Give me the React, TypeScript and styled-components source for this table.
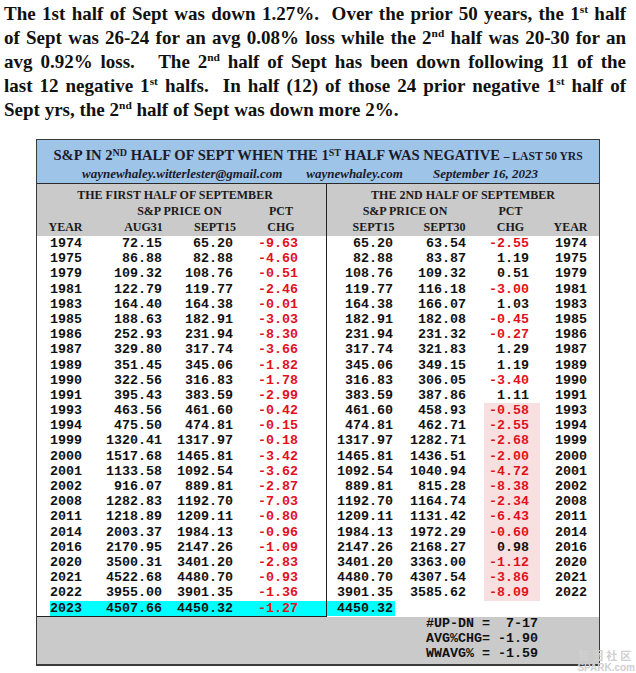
import React from 'react';
import styled, { createGlobalStyle } from 'styled-components';

const Global = createGlobalStyle`
  html, body { margin: 0; padding: 0; background: #fff; }
  body { width: 636px; height: 673px; overflow: hidden; }
`;

const Page = styled.div`
  position: relative;
  width: 636px;
  height: 673px;
  background: #fff;
  overflow: hidden;
`;

const Intro = styled.div`
  padding: 2px 10px 0 4px;
  font-family: "Liberation Serif", "Times New Roman", serif;
  font-weight: bold;
  font-size: 19px;
  line-height: 24px;
  color: #111;
`;

const IntroLine = styled.div<{ $last?: boolean }>`
  text-align: justify;
  text-align-last: ${(p) => (p.$last ? 'left' : 'justify')};
`;

const Sup = styled.sup`
  font-size: 0.6em;
  vertical-align: 0.6em;
  line-height: 0;
`;

const Box = styled.div`
  margin: 17px 0 0 36px;
  width: 564px;
  box-sizing: border-box;
  border: 1px solid #3a3a3a;
  border-bottom-width: 2px;
  background: #fff;
`;

const TitleBand = styled.div`
  height: 44px;
  box-sizing: border-box;
  background: #9ec4e8;
  border-bottom: 1px solid #2a2a2a;
  display: flex;
  flex-direction: column;
  align-items: center;
  font-family: "Liberation Serif", "Times New Roman", serif;
  font-weight: bold;
  color: #1b1b2b;
`;

const Title = styled.div`
  margin-top: 6px;
  font-size: 14.6px;
  line-height: 18px;
  white-space: nowrap;
`;

const TitleSmall = styled.span`
  font-size: 11.6px;
`;

const TitleSup = styled.span`
  font-size: 10px;
  position: relative;
  top: -4px;
`;

const Subtitle = styled.div`
  align-self: flex-start;
  padding-left: 45px;
  font-size: 13px;
  line-height: 15px;
  font-style: italic;
  white-space: nowrap;
  display: flex;
`;

const SubItem = styled.span<{ $gap: number }>`
  margin-left: ${(p) => p.$gap}px;
`;

const Body = styled.div`
  display: grid;
  grid-template-columns: 290px 1fr;
`;

const LeftPanel = styled.div`
  border-right: 1px solid #222;
  border-bottom: 1px solid #222;
`;

const RightPanel = styled.div``;

const Header = styled.div`
  height: 52px;
  box-sizing: border-box;
  padding-top: 3px;
  background: #cacaca;
  font-family: "Liberation Serif", "Times New Roman", serif;
  font-weight: bold;
  font-size: 12px;
  line-height: 16px;
  color: #1a1a1a;
`;

const HeadGrid = styled.div<{ $cols: string }>`
  display: grid;
  grid-template-columns: ${(p) => p.$cols};
  white-space: nowrap;
`;

const HeadCell = styled.div<{ $col: string; $row: number; $shift?: number }>`
  grid-column: ${(p) => p.$col};
  grid-row: ${(p) => p.$row};
  text-align: center;
  position: relative;
  left: ${(p) => p.$shift || 0}px;
`;

const Rows = styled.div`
  font-family: "Liberation Mono", "Courier New", monospace;
  font-weight: bold;
  font-size: 13.33px;
  color: #111;
`;

const LeftRow = styled.div<{ $hl?: boolean }>`
  display: grid;
  grid-template-columns: 32px 80px 71px 65px 1fr;
  margin-left: 13px;
  height: 15.2px;
  line-height: 15.2px;
  background: ${(p) => (p.$hl ? '#00ffff' : 'transparent')};
`;

const RightRow = styled.div`
  display: grid;
  grid-template-columns: 68px 71px 18px 56px 1fr;
  height: 15.2px;
  line-height: 15.2px;
`;

const Num = styled.div<{ $red?: boolean; $pad?: number; $bg?: string; $left?: boolean }>`
  text-align: ${(p) => (p.$left ? 'left' : 'right')};
  white-space: pre;
  color: ${(p) => (p.$red ? '#e3101c' : '#111')};
  padding-right: ${(p) => (p.$left ? 0 : p.$pad || 0)}px;
  padding-left: ${(p) => (p.$left ? p.$pad || 0 : 0)}px;
  background: ${(p) => p.$bg || 'transparent'};
`;

const Footer = styled.div`
  display: grid;
  grid-template-columns: 290px 1fr;
  height: 47px;
  background: #cacaca;
`;

const Stats = styled.div`
  padding-left: 99px;
  margin-top: -1px;
  font-family: "Liberation Mono", "Courier New", monospace;
  font-weight: bold;
  font-size: 13.33px;
  line-height: 15px;
  white-space: pre;
  color: #111;
`;

const Watermark = styled.div`
  position: absolute;
  right: 1px;
  bottom: 0px;
  display: flex;
  flex-direction: column;
  align-items: center;
  color: #cfcfcf;
  font-family: "Liberation Sans", Arial, "Noto Sans CJK SC", sans-serif;
  font-weight: bold;
`;

const WmTop = styled.div`
  font-size: 11px;
  line-height: 13px;
  letter-spacing: 3px;
  font-family: "Noto Sans CJK SC", sans-serif;
`;

const WmBottom = styled.div`
  font-size: 10px;
  line-height: 11px;
`;

type L = [string, string, string, string];
const left: L[] = [
  ['1974', '72.15', '65.20', '-9.63'],
  ['1975', '86.88', '82.88', '-4.60'],
  ['1979', '109.32', '108.76', '-0.51'],
  ['1981', '122.79', '119.77', '-2.46'],
  ['1983', '164.40', '164.38', '-0.01'],
  ['1985', '188.63', '182.91', '-3.03'],
  ['1986', '252.93', '231.94', '-8.30'],
  ['1987', '329.80', '317.74', '-3.66'],
  ['1989', '351.45', '345.06', '-1.82'],
  ['1990', '322.56', '316.83', '-1.78'],
  ['1991', '395.43', '383.59', '-2.99'],
  ['1993', '463.56', '461.60', '-0.42'],
  ['1994', '475.50', '474.81', '-0.15'],
  ['1999', '1320.41', '1317.97', '-0.18'],
  ['2000', '1517.68', '1465.81', '-3.42'],
  ['2001', '1133.58', '1092.54', '-3.62'],
  ['2002', '916.07', '889.81', '-2.87'],
  ['2008', '1282.83', '1192.70', '-7.03'],
  ['2011', '1218.89', '1209.11', '-0.80'],
  ['2014', '2003.37', '1984.13', '-0.96'],
  ['2016', '2170.95', '2147.26', '-1.09'],
  ['2020', '3500.31', '3401.20', '-2.83'],
  ['2021', '4522.68', '4480.70', '-0.93'],
  ['2022', '3955.00', '3901.35', '-1.36'],
  ['2023', '4507.66', '4450.32', '-1.27'],
];

const right: L[] = [
  ['65.20', '63.54', '-2.55', '1974'],
  ['82.88', '83.87', '1.19', '1975'],
  ['108.76', '109.32', '0.51', '1979'],
  ['119.77', '116.18', '-3.00', '1981'],
  ['164.38', '166.07', '1.03', '1983'],
  ['182.91', '182.08', '-0.45', '1985'],
  ['231.94', '231.32', '-0.27', '1986'],
  ['317.74', '321.83', '1.29', '1987'],
  ['345.06', '349.15', '1.19', '1989'],
  ['316.83', '306.05', '-3.40', '1990'],
  ['383.59', '387.86', '1.11', '1991'],
  ['461.60', '458.93', '-0.58', '1993'],
  ['474.81', '462.71', '-2.55', '1994'],
  ['1317.97', '1282.71', '-2.68', '1999'],
  ['1465.81', '1436.51', '-2.00', '2000'],
  ['1092.54', '1040.94', '-4.72', '2001'],
  ['889.81', '815.28', '-8.38', '2002'],
  ['1192.70', '1164.74', '-2.34', '2008'],
  ['1209.11', '1131.42', '-6.43', '2011'],
  ['1984.13', '1972.29', '-0.60', '2014'],
  ['2147.26', '2168.27', '0.98', '2016'],
  ['3401.20', '3363.00', '-1.12', '2020'],
  ['4480.70', '4307.54', '-3.86', '2021'],
  ['3901.35', '3585.62', '-8.09', '2022'],
  ['4450.32', '', '', ''],
];

const PINK = '#f8e0e0';
const CYAN = '#00ffff';

export default function App() {
  return (
    <Page>
      <Global />
      <Intro>
        <IntroLine>
          The 1st half of Sept was down 1.27%.&nbsp; Over the prior 50 years, the 1<Sup>st</Sup> half
        </IntroLine>
        <IntroLine>
          of Sept was 26-24 for an avg 0.08% loss while the 2<Sup>nd</Sup> half was 20-30 for an
        </IntroLine>
        <IntroLine>
          avg 0.92% loss.&nbsp;&nbsp; The 2<Sup>nd</Sup> half of Sept has been down following 11 of the
        </IntroLine>
        <IntroLine>
          last 12 negative 1<Sup>st</Sup> halfs.&nbsp; In half (12) of those 24 prior negative 1<Sup>st</Sup> half of
        </IntroLine>
        <IntroLine $last>
          Sept yrs, the 2<Sup>nd</Sup> half of Sept was down more 2%.
        </IntroLine>
      </Intro>

      <Box>
        <TitleBand>
          <Title>
            S&amp;P IN 2<TitleSup>ND</TitleSup> HALF OF SEPT WHEN THE 1<TitleSup>ST</TitleSup> HALF WAS NEGATIVE{' '}
            <TitleSmall>– LAST 50 YRS</TitleSmall>
          </Title>
          <Subtitle>
            <SubItem $gap={0}>waynewhaley.witterlester@gmail.com</SubItem>
            <SubItem $gap={24}>waynewhaley.com</SubItem>
            <SubItem $gap={30}>September 16, 2023</SubItem>
          </Subtitle>
        </TitleBand>

        <Body>
          <LeftPanel>
            <Header>
              <HeadGrid $cols="57px 14px 71px 72px 60px 1fr">
                <HeadCell $col="1 / 6" $row={1} $shift={1}>THE FIRST HALF OF SEPTEMBER</HeadCell>
                <HeadCell $col="3 / 5" $row={2}>S&amp;P PRICE ON</HeadCell>
                <HeadCell $col="5" $row={2}>PCT</HeadCell>
                <HeadCell $col="1" $row={3}>YEAR</HeadCell>
                <HeadCell $col="3" $row={3}>AUG31</HeadCell>
                <HeadCell $col="4" $row={3}>SEPT15</HeadCell>
                <HeadCell $col="5" $row={3}>CHG</HeadCell>
              </HeadGrid>
            </Header>
            <Rows>
              {left.map((r, i) => (
                <LeftRow key={r[0]} $hl={i === left.length - 1}>
                  <Num $left>{r[0]}</Num>
                  <Num>{r[1]}</Num>
                  <Num>{r[2]}</Num>
                  <Num $red>{r[3]}</Num>
                  <div />
                </LeftRow>
              ))}
            </Rows>
          </LeftPanel>

          <RightPanel>
            <Header>
              <HeadGrid $cols="10px 73px 69px 63px 1fr">
                <HeadCell $col="1 / 6" $row={1}>THE 2ND HALF OF SEPTEMBER</HeadCell>
                <HeadCell $col="2 / 4" $row={2} $shift={-3}>S&amp;P PRICE ON</HeadCell>
                <HeadCell $col="4" $row={2}>PCT</HeadCell>
                <HeadCell $col="2" $row={3}>SEPT15</HeadCell>
                <HeadCell $col="3" $row={3}>SEPT30</HeadCell>
                <HeadCell $col="4" $row={3}>CHG</HeadCell>
                <HeadCell $col="5" $row={3}>YEAR</HeadCell>
              </HeadGrid>
            </Header>
            <Rows>
              {right.map((r, i) => {
                const last = i === right.length - 1;
                const pink = i >= 11 && !last;
                return (
                  <RightRow key={i}>
                    <Num $pad={2} $bg={last ? CYAN : undefined}>{r[0]}</Num>
                    <Num>{r[1]}</Num>
                    <div />
                    <Num $pad={11} $red={r[2].startsWith('-')} $bg={pink ? PINK : undefined}>{r[2]}</Num>
                    <Num $left $pad={15}>{r[3]}</Num>
                  </RightRow>
                );
              })}
            </Rows>
          </RightPanel>
        </Body>

        <Footer>
          <div />
          <Stats>
            {'#UP-DN =  7-17\nAVG%CHG= -1.90\nWWAVG% = -1.59'}
          </Stats>
        </Footer>
      </Box>

      <Watermark>
        <WmTop>智图社区</WmTop>
        <WmBottom>SPARK.com</WmBottom>
      </Watermark>
    </Page>
  );
}
